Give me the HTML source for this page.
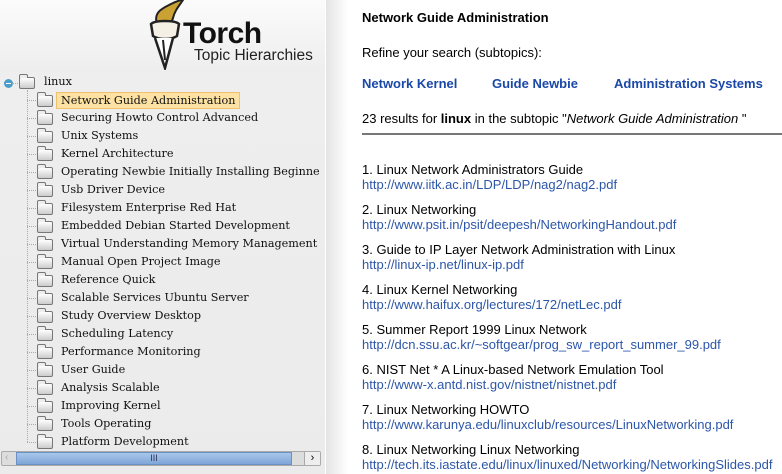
<!DOCTYPE html>
<html><head><style>
*{margin:0;padding:0;box-sizing:border-box}
body{width:782px;height:474px;overflow:hidden;background:#fff;font-family:"Liberation Sans",Arial,sans-serif;position:relative}
#left{position:absolute;left:0;top:0;width:325px;height:474px;background:linear-gradient(#fbfbfb 0,#eeeeee 70px,#ebebeb 100%)}
#sep{position:absolute;left:326px;top:0;width:22px;height:474px;background:linear-gradient(90deg,#e4e4e4,#fff)}
.tree{position:absolute;left:0;top:0;width:322px;height:450px;overflow:hidden;font-family:"DejaVu Serif",serif;font-size:11.2px;color:#111}
.fold{position:absolute;width:16px;height:12px;border:1px solid #777;border-radius:2px;background:linear-gradient(#fff,#ccc)}
.fold:before{content:"";position:absolute;left:-1px;top:-4px;width:7px;height:3px;border:1px solid #777;border-bottom:none;border-radius:2px 2px 0 0;background:#eee}
.lbl{position:absolute;top:0;line-height:18px;white-space:nowrap}
.hl{background:#fde2a4;border:1px solid #f0c06a;padding:0 4px;line-height:15px}
.vl{position:absolute;left:27px;width:1px;border-left:1px dotted #aaa}
.hb{position:absolute;width:9px;border-top:1px dotted #aaa}
#sb{position:absolute;left:1px;top:451px;width:320px;height:15px;border:1px solid #aaa;background:#ddd;border-radius:2px}
#thumb{position:absolute;left:14px;top:0;width:276px;height:13px;background:linear-gradient(#a9c6ea,#7ea5d8);border:1px solid #6a90c4;color:#335;font-size:9px;text-align:center;line-height:11px}
.r{position:absolute;left:362px;font-size:13px;color:#000;white-space:nowrap}
a{color:#2c56a8;text-decoration:none}
.sub{font-weight:bold;color:#1a48a8;font-size:13px}
</style></head><body>
<div id="left">
<svg style="position:absolute;left:145px;top:0" width="42" height="70" viewBox="0 0 42 70">
<path d="M12 24 C8 12 18 8 26 4 C32 1 36 0 38 0 C34 6 30 10 28 18 C27 22 24 26 20 26 Z" fill="#caa133" stroke="#222" stroke-width="2"/>
<path d="M6 24 C10 20 30 20 34 24 L32 36 C26 40 14 40 8 36 Z" fill="#f4f0e6" stroke="#222" stroke-width="2.5"/>
<path d="M10 38 L20 68 L28 38" fill="#fff" stroke="#222" stroke-width="2.5"/>
<path d="M18 40 L20 60" stroke="#222" stroke-width="2"/>
</svg>
<div style="position:absolute;left:183px;top:19px;font-size:30px;font-weight:bold;color:#111;letter-spacing:-0.5px;line-height:30px">Torch</div>
<div style="position:absolute;left:194px;top:48px;font-size:15.5px;color:#222;line-height:16px">Topic Hierarchies</div>
<div class="tree">
<div style="position:absolute;left:4px;top:79px;width:9px;height:9px;border-radius:50%;background:#4a9ec8"></div>
<div style="position:absolute;left:6px;top:83px;width:5px;height:1px;background:#fff"></div>
<div class="hb" style="left:12px;top:83px;width:6px"></div>
<div class="fold" style="left:19px;top:77px"></div>
<div class="lbl" style="left:44px;top:73px">linux</div>
<div class="vl" style="top:90px;height:352px"></div>
<div id="items"></div>
</div>
<div id="sb"><span style="position:absolute;left:3px;top:0;font-size:10px;color:#aaa">‹</span><div id="thumb">III</div><div style="position:absolute;right:0;top:0;width:16px;height:13px;border-left:1px solid #aaa;background:#eee;font-size:11px;text-align:center;line-height:12px">›</div></div>
</div>
<div id="sep"></div>
<script>
var it=["Network Guide Administration","Securing Howto Control Advanced","Unix Systems","Kernel Architecture","Operating Newbie Initially Installing Beginne","Usb Driver Device","Filesystem Enterprise Red Hat","Embedded Debian Started Development","Virtual Understanding Memory Management","Manual Open Project Image","Reference Quick","Scalable Services Ubuntu Server","Study Overview Desktop","Scheduling Latency","Performance Monitoring","User Guide","Analysis Scalable","Improving Kernel","Tools Operating","Platform Development"];
var h="";it.forEach(function(t,i){var y=91+i*18;h+='<div class="hb" style="left:27px;top:'+(y+9)+'px"></div><div class="fold" style="left:37px;top:'+(y+4)+'px"></div><div class="lbl'+(i==0?' hl':'')+'" style="left:'+(i==0?56:61)+'px;top:'+(y+(i==0?1:0))+'px">'+t+'</div>'});
document.getElementById("items").outerHTML=h;
</script>
<div class="r" style="top:10px;font-weight:bold">Network Guide Administration</div>
<div class="r" style="top:45px">Refine your search (subtopics):</div>
<div class="r sub" style="top:76px">Network Kernel</div>
<div class="r sub" style="top:76px;left:492px">Guide Newbie</div>
<div class="r sub" style="top:76px;left:614px">Administration Systems</div>
<div class="r" style="top:111px">23 results for <b>linux</b> in the subtopic "<i>Network Guide Administration</i> "</div>
<div style="position:absolute;left:362px;top:133px;width:420px;height:2px;background:#777"></div>
<div id="res"></div>
<script>
var rs=[["1. Linux Network Administrators Guide","http://www.iitk.ac.in/LDP/LDP/nag2/nag2.pdf"],["2. Linux Networking","http://www.psit.in/psit/deepesh/NetworkingHandout.pdf"],["3. Guide to IP Layer Network Administration with Linux","http://linux-ip.net/linux-ip.pdf"],["4. Linux Kernel Networking","http://www.haifux.org/lectures/172/netLec.pdf"],["5. Summer Report 1999 Linux Network","http://dcn.ssu.ac.kr/~softgear/prog_sw_report_summer_99.pdf"],["6. NIST Net * A Linux-based Network Emulation Tool","http://www-x.antd.nist.gov/nistnet/nistnet.pdf"],["7. Linux Networking HOWTO","http://www.karunya.edu/linuxclub/resources/LinuxNetworking.pdf"],["8. Linux Networking Linux Networking","http://tech.its.iastate.edu/linux/linuxed/Networking/NetworkingSlides.pdf"]];
var h="";rs.forEach(function(r,i){var y=162+i*40;h+='<div class="r" style="top:'+y+'px">'+r[0]+'</div><div class="r" style="top:'+(y+15)+'px"><a>'+r[1]+'</a></div>'});
document.getElementById("res").outerHTML=h;
</script>
</body></html>
